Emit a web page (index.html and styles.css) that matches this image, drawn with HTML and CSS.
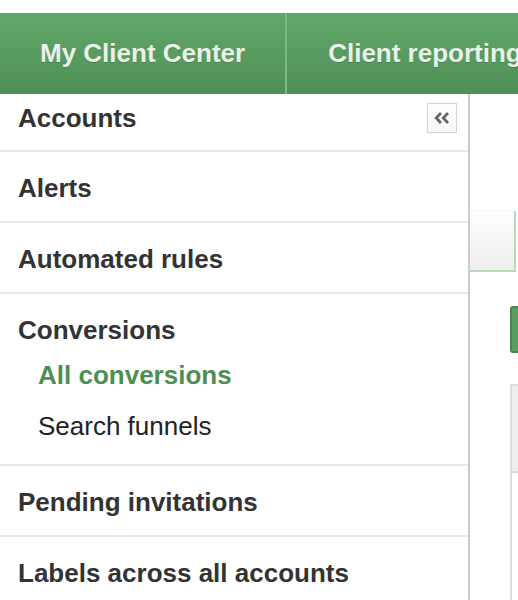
FILE: index.html
```html
<!DOCTYPE html>
<html>
<head>
<meta charset="utf-8">
<link rel="stylesheet" href="styles.css">
</head>
<body>
<div class="topgap"></div>
<nav class="navbar">
  <div class="navtab">My Client Center</div>
  <div class="navtab second">Client reporting</div>
</nav>
<div class="main">
  <aside class="sidebar">
    <button class="collapse" aria-label="Collapse">
      <svg width="16" height="12" viewBox="0 0 16 12"><polyline points="7,1 2.2,6 7,11" fill="none" stroke="#666666" stroke-width="2.8"/><polyline points="14,1 9.2,6 14,11" fill="none" stroke="#666666" stroke-width="2.8"/></svg>
    </button>
    <div class="item first">Accounts</div>
    <div class="item">Alerts</div>
    <div class="item">Automated rules</div>
    <div class="item group">
      <div class="grouptitle">Conversions</div>
      <div class="sub active">All conversions</div>
      <div class="sub">Search funnels</div>
    </div>
    <div class="item">Pending invitations</div>
    <div class="item">Labels across all accounts</div>
  </aside>
  <section class="content">
    <div class="tab"></div>
    <div class="greenbtn"></div>
    <div class="table"><div class="thead"></div></div>
  </section>
</div>
</body>
</html>
```
FILE: styles.css
```css
html, body {
  margin: 0;
  padding: 0;
  height: 100%;
  overflow: hidden;
  background: #fff;
  font-family: "Liberation Sans", Arial, sans-serif;
}
.topgap { height: 13px; }
.navbar {
  display: flex;
  height: 81px;
  background: linear-gradient(#62a86a, #4f8f57);
  white-space: nowrap;
}
.navtab {
  display: flex;
  align-items: center;
  padding: 0 40px 0 40px;
  font-size: 26px;
  font-weight: bold;
  color: #e9f2e9;
  text-shadow: 0 1px 0 rgba(0,0,0,0.18);
  border-right: 2px solid #7cb982;
}
.navtab.second { padding-left: 41px; border-right: none; }
.main {
  display: flex;
  height: 506px;
}
.sidebar {
  position: relative;
  width: 468px;
  flex: none;
  border-right: 2px solid #cccccc;
}
.collapse {
  position: absolute;
  top: 9px;
  right: 11px;
  width: 30px;
  height: 30px;
  padding: 0;
  margin: 0;
  border: 1px solid #d2d2d2;
  background: linear-gradient(#ffffff, #f6f6f6);
  display: flex;
  align-items: center;
  justify-content: center;
}
.item {
  padding: 21px 0 18px 18px;
  font-size: 26px;
  line-height: 30px;
  font-weight: bold;
  color: #333333;
  border-bottom: 2px solid #e8e8e8;
}
.item.first { padding-top: 9px; padding-bottom: 17px; }
.sub {
  padding: 15px 0 6px 20px;
  font-weight: normal;
  color: #222;
}
.sub.active { font-weight: bold; color: #4d8f52; }
.item.group { padding-bottom: 17px; }
.content {
  flex: 1;
  padding-top: 116px;
  overflow: hidden;
}
.tab {
  width: 44px;
  height: 59px;
  border-top: 1px solid #f6f9f6;
  border-right: 2px solid #b9d9bb;
  border-bottom: 2px solid #b9d9bb;
  border-top-right-radius: 4px;
  background: linear-gradient(#ffffff, #eeeeee);
}
.greenbtn {
  margin: 34px 0 0 40px;
  width: 60px;
  height: 43px;
  border: 2px solid #4a8750;
  border-radius: 3px 0 0 3px;
  background: #5a9e61;
}
.table {
  margin: 31px 0 0 40px;
  height: 300px;
  border-left: 2px solid #dddddd;
  border-top: 2px solid #dddddd;
}
.thead {
  height: 85px;
  background: #eeeeee;
  border-bottom: 2px solid #dddddd;
}
```
